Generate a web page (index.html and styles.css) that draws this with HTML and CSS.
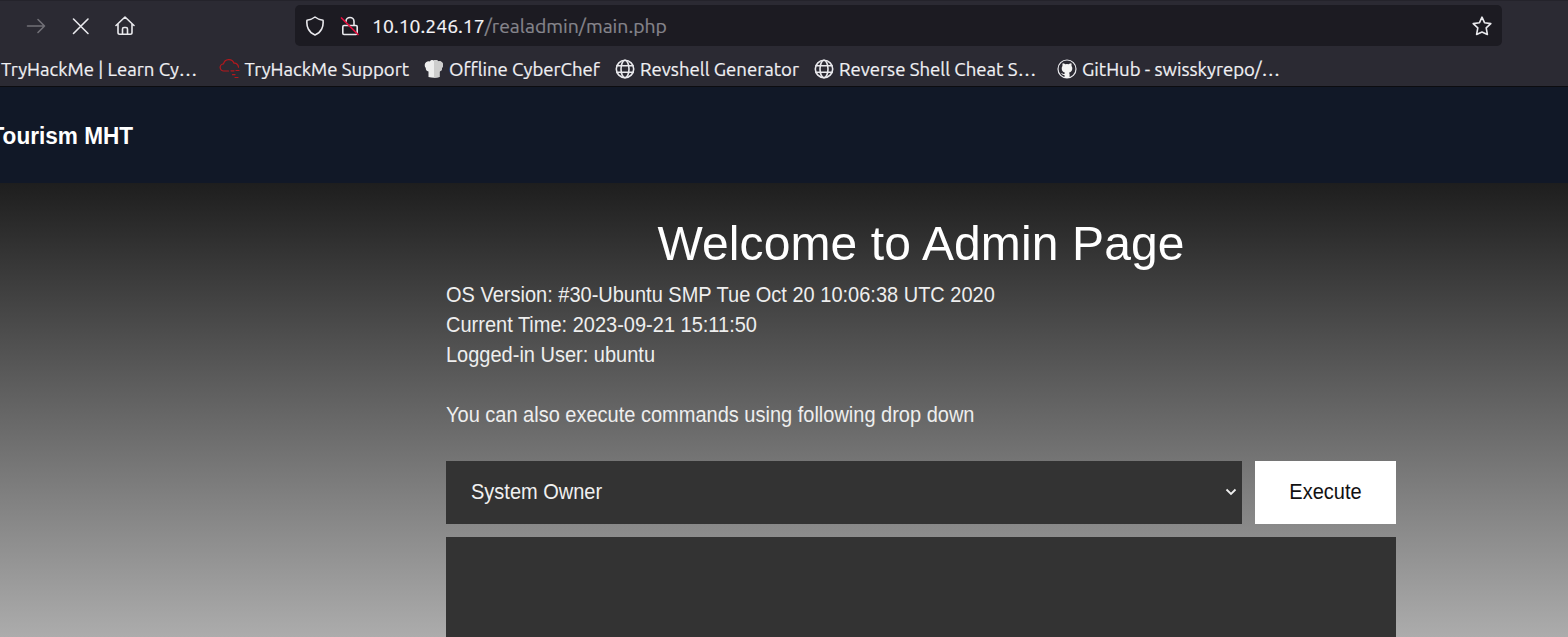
FILE: index.html
```html
<!DOCTYPE html>
<html lang="en">
<head>
<meta charset="utf-8">
<title>Tourism MHT</title>
<link rel="stylesheet" href="styles.css">
</head>
<body>
<div class="browser">
  <div class="toolbar">
    <div class="nav-buttons">
      <svg class="icon dim" viewBox="0 0 20 20"><path d="M1.500 10H18.500M12 3.500l6.500 6.500-6.500 6.500"/></svg>
      <svg class="icon" viewBox="0 0 20 20"><path d="M2.500 3 17 17.500M17 3 2.500 17.500"/></svg>
      <svg class="icon" viewBox="0 0 20 20"><path d="M1 9.500 10 1l9 8.500M3 8v8.500q0 1.700 1.700 1.700h10.600q1.700 0 1.700-1.700V8M7.500 18v-5q0-1.500 1.500-1.500h2q1.500 0 1.500 1.500v5"/></svg>
    </div>
    <div class="urlbar">
      <svg class="icon" viewBox="0 0 20 20"><path d="M10 1c2.500 2 5.500 2.800 8 3.200.8 6-1.500 12.300-8 14.800C3.500 16.500 1.200 10.200 2 4.200 4.500 3.800 7.500 3 10 1z"/></svg>
      <svg class="icon lock" viewBox="0 0 20 20"><path d="M4 9.500h12q1.200 0 1.200 1.200v6.600q0 1.200-1.200 1.200H4q-1.200 0-1.200-1.200v-6.600q0-1.200 1.200-1.200zM6 5.500a4 4 0 0 1 8 0V9"/><path class="slash" d="M1.500 2 18 18.500"/></svg>
      <div class="url"><span class="host">10.10.246.17</span><span class="path">/realadmin/main.php</span></div>
      <svg class="icon star" viewBox="0 0 20 20"><path d="M10 1.200l2.500 5.500 6.300.9-4.600 4.300 1.200 6.600L10 16l-5.400 2.500 1.200-6.600L1.200 7.600l6.300-.9z"/></svg>
    </div>
  </div>
  <div class="bookmarks">
    <div class="bookmark b1"><span>TryHackMe | Learn Cy…</span></div>
    <div class="bookmark b2"><svg class="icon cloud" viewBox="0 0 20 20"><path d="M9 12H4.500a3.600 3.600 0 0 1-.5-7.200 5.500 5.500 0 0 1 10.500-.6 4 4 0 0 1 4.500 4M11.500 11.800h3M16.500 11.500h3M13 15.700h2.500M15.500 18.500h3"/></svg><span>TryHackMe Support</span></div>
    <div class="bookmark b3"><svg class="icon chef" viewBox="0 0 20 20"><path d="M4.500 12.500C2.500 12 1.500 10.500 1.800 9 .3 7.500.3 4.500 2 3.200 3.300 2 4.800 2 5.800 2.400 7 .8 8.700.7 10 1.500 11.500.7 13.200.9 14.200 2.400c1.500-.5 3 0 4 1.200 1.200 1.600 1 4-.2 5.400 0 2-1 3.200-2.500 3.500v5.500q-5.500 1.500-11 0z"/><path class="shade" d="M10 1.500c1.500-.8 3.200-.6 4.200.9 1.500-.5 3 0 4 1.200 1.200 1.600 1 4-.2 5.400 0 2-1 3.200-2.500 3.500v5.500q-2.700.8-5.500.8z"/></svg><span>Offline CyberChef</span></div>
    <div class="bookmark b4"><svg class="icon" viewBox="0 0 20 20"><circle cx="10" cy="10" r="8.700"/><ellipse cx="10" cy="10" rx="4" ry="8.700"/><path d="M2 6.800h16M2 13.200h16"/></svg><span>Revshell Generator</span></div>
    <div class="bookmark b5"><svg class="icon" viewBox="0 0 20 20"><circle cx="10" cy="10" r="8.700"/><ellipse cx="10" cy="10" rx="4" ry="8.700"/><path d="M2 6.800h16M2 13.200h16"/></svg><span>Reverse Shell Cheat S…</span></div>
    <div class="bookmark b6"><svg class="icon github" viewBox="0 0 20 20"><circle cx="10" cy="10" r="9"/><path class="cat" d="M7.500 19v-3c-2.500.4-2.600-1.500-3.600-2 1.500-.3 2 1.400 3.500 1 .1-.7.300-1 .6-1.300C5.500 13 4.700 11.500 4.700 9.300c0-1 .3-1.800.8-2.400-.2-.9-.1-1.800.2-2.600 1 0 1.900.5 2.600 1q1.700-.4 3.400 0c.7-.5 1.600-1 2.600-1 .3.800.4 1.700.2 2.600.5.600.8 1.400.8 2.400 0 2.200-.8 3.700-3.300 4.400.4.400.6 1 .6 1.800V19z"/></svg><span>GitHub - swisskyrepo/…</span></div>
  </div>
</div>
<header class="site-header"><span class="brand">Tourism MHT</span></header>
<main class="page">
  <div class="content">
    <h1 class="title">Welcome to Admin Page</h1>
    <div class="info">
      <p class="line">OS Version: #30-Ubuntu SMP Tue Oct 20 10:06:38 UTC 2020</p>
      <p class="line">Current Time: 2023-09-21 15:11:50</p>
      <p class="line">Logged-in User: ubuntu</p>
      <p class="line hint">You can also execute commands using following drop down</p>
    </div>
    <div class="command-form">
      <div class="select"><span class="tall">System Owner</span><svg class="chevron" viewBox="0 0 12 8"><path d="M1.500 1.500 6 6l4.500-4.500"/></svg></div>
      <button class="execute"><span class="tall">Execute</span></button>
    </div>
    <div class="output"></div>
  </div>
</main>
</body>
</html>
```
FILE: styles.css
```css
* { box-sizing: border-box; }
body {
  margin: 0;
  height: 637px;
  overflow: hidden;
  display: flex;
  flex-direction: column;
  font-family: "Liberation Sans", Arial, sans-serif;
}
.browser {
  flex: none;
  height: 87px;
  background: #2b2a33;
  border-top: 1px solid #24232b;
  border-bottom: 1px solid #0c0c10;
  color: #f0f0f3;
  font-family: Ubuntu, "Noto Sans", sans-serif;
  font-size: 18.58px;
}
.toolbar { display: flex; height: 49px; padding-top: 4px; }
.nav-buttons { display: flex; gap: 24.5px; align-items: center; width: 295px; height: 42px; padding-left: 26px; }
.icon { flex: none; width: 20px; height: 20px; fill: none; stroke: #e9e9ed; stroke-width: 1.6; stroke-linecap: round; stroke-linejoin: round; }
.dim { stroke: #717077; }
.urlbar { display: flex; align-items: center; width: 1207px; height: 41px; padding: 0 10px; border-radius: 5px; background: #1c1b22; }
.lock { margin-left: 15px; }
.slash { stroke: #e5103f; stroke-width: 1.7; }
.url { margin-left: 12px; padding-top: 1px; white-space: nowrap; font-size: 19.4px; }
.host { color: #f5f5f8; -webkit-text-stroke: 0.2px #f5f5f8; }
.path { color: #86858c; -webkit-text-stroke: 0.2px #86858c; }
.star { margin-left: auto; }
.bookmarks { display: flex; align-items: center; height: 37px; padding-top: 1px; white-space: nowrap; }
.bookmark { flex: none; display: flex; align-items: center; gap: 5px; -webkit-text-stroke: 0.2px #f0f0f3; }
.b1 { width: 218px; padding-left: 1px; }
.b2 { width: 206px; padding-left: 0.5px; }
.b3 { width: 191px; }
.b4 { width: 199px; }
.b5 { width: 243px; }
.cloud { width: 21px; stroke: #b3181d; stroke-width: 1.2; }
.chef { stroke: none; fill: #ededed; }
.shade { fill: #cdcdcd; }
.github { stroke-width: 1.2; }
.cat { fill: #f4f4f4; stroke: none; }
.site-header { flex: none; height: 96px; display: flex; align-items: center; background: #111827; color: #fff; }
.brand { margin-left: -9.5px; padding-top: 4px; font-size: 22.6px; font-weight: 700; line-height: 32px; white-space: nowrap; transform: scaleY(1.04); }
.page { flex: 1; min-height: 0; overflow: hidden; background: linear-gradient(#1e1e1e, #acacac); }
.content { width: 950px; margin-left: 446px; padding-top: 31px; }
.title { margin: 0; color: #fff; font-size: 48px; font-weight: 400; line-height: 60px; letter-spacing: 0.12px; text-align: center; transform: scaleY(1.01); }
.info { margin-top: 6px; color: #eee; font-size: 20px; line-height: 30px; }
.line { margin: 0; transform: scaleY(1.07); }
.hint { margin-top: 30px; }
.tall { display: inline-block; transform: scaleY(1.07); }
.command-form { display: grid; grid-template-columns: 796px 141px; gap: 13px; margin-top: 30.5px; height: 63.500px; }
.select { display: flex; align-items: center; justify-content: space-between; padding: 0 5px 0 25px; background: #333; color: #f0f0f0; font-size: 20px; }
.chevron { width: 12px; height: 8px; fill: none; stroke: #eee; stroke-width: 1.8; }
.execute { border: 0; padding: 0; background: #fff; color: #111; font: 20px "Liberation Sans", Arial, sans-serif; }
.output { height: 120px; margin-top: 13px; background: #333; }
```
